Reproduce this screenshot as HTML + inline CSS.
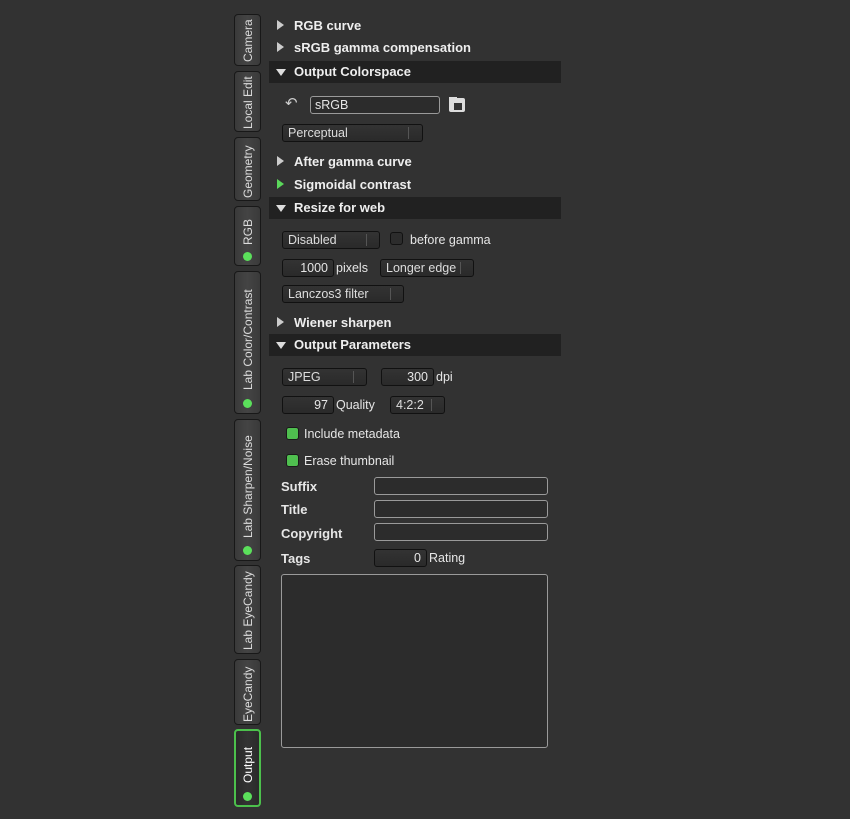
<!DOCTYPE html>
<html><head><meta charset="utf-8"><style>
*{box-sizing:border-box;margin:0;padding:0}
body{width:850px;height:819px;background:#323232;font-family:"Liberation Sans",sans-serif;font-size:12.5px;color:#e6e6e6;position:relative;overflow:hidden}
.a{position:absolute}
.tab{position:absolute;left:234px;width:27px;border:1px solid #181818;border-radius:4px;background:linear-gradient(90deg,#3a3a3a,#444 50%,#3a3a3a)}
.tab span{position:absolute;left:50%;white-space:nowrap;transform-origin:0 0;transform:rotate(-90deg) translate(0,-50%);color:#dcdcdc;font-size:12px}
.dot{position:absolute;left:8px;width:9px;height:9px;border-radius:50%;background:#5be05b}
.hdr{position:absolute;left:276px;font-weight:bold;font-size:13px;color:#eee}
.bar{position:absolute;left:269px;width:292px;height:22px;background:#212121}
.tri{position:absolute;left:277px;width:0;height:0;border-top:5px solid transparent;border-bottom:5px solid transparent;border-left:7px solid #ccc}
.dn{position:absolute;left:276px;width:0;height:0;border-left:5px solid transparent;border-right:5px solid transparent;border-top:7px solid #ddd}
.cb{position:absolute;height:18px;border:1px solid #111;border-radius:3px;background:linear-gradient(#333,#2a2a2a);padding-left:5px;line-height:16px;color:#ddd}
.cb i{position:absolute;top:2px;bottom:2px;width:1px;background:#555}
.sp{position:absolute;height:18px;border:1px solid #111;border-radius:3px;background:linear-gradient(#333,#2a2a2a);text-align:right;padding-right:5px;line-height:16px}
.in{position:absolute;height:18px;border:1px solid #9a9a9a;border-radius:3px;background:#2c2c2c;padding-left:4px;line-height:16px}
.lb{position:absolute;font-weight:bold;font-size:13px}
.ck{position:absolute;width:13px;height:13px;border-radius:3px;border:1px solid #111;background:#2c2c2c}
.g{background:#4fbf4f;border-color:#1a1a1a}
</style></head><body>
<div class="tab" style="top:14px;height:52px"><span style="top:47px">Camera</span></div>
<div class="tab" style="top:71px;height:61px"><span style="top:57px">Local Edit</span></div>
<div class="tab" style="top:137px;height:64px"><span style="top:60px">Geometry</span></div>
<div class="tab" style="top:206px;height:60px"><span style="top:38px">RGB</span><div class="dot" style="top:45px"></div></div>
<div class="tab" style="top:271px;height:143px"><span style="top:118px">Lab Color/Contrast</span><div class="dot" style="top:127px"></div></div>
<div class="tab" style="top:419px;height:142px"><span style="top:118px">Lab Sharpen/Noise</span><div class="dot" style="top:126px"></div></div>
<div class="tab" style="top:565px;height:89px"><span style="top:84px">Lab EyeCandy</span></div>
<div class="tab" style="top:659px;height:66px"><span style="top:62px">EyeCandy</span></div>
<div class="tab" style="top:729px;height:78px;border:2px solid #4cc04c;background:linear-gradient(90deg,#2a2a2a,#333 50%,#2a2a2a)"><span style="top:52px;color:#fff">Output</span><div class="dot" style="top:61px;left:7px"></div></div>

<div class="tri" style="top:20px"></div><div class="hdr" style="left:294px;top:18px">RGB curve</div>
<div class="tri" style="top:42px"></div><div class="hdr" style="left:294px;top:40px">sRGB gamma compensation</div>
<div class="bar" style="top:61px"></div><div class="dn" style="top:69px"></div><div class="hdr" style="left:294px;top:64px">Output Colorspace</div>
<div class="a" style="left:285px;top:94px;font-size:15px;color:#ccc">&#x21B6;</div>
<div class="in" style="left:310px;top:96px;width:130px">sRGB</div>
<svg class="a" style="left:448px;top:96px" width="19" height="17"><rect x="1" y="2" width="16" height="14" rx="2" fill="#ddd"/><rect x="1" y="1" width="8" height="3" fill="#ddd"/><rect x="6" y="7" width="8" height="7" fill="#333"/></svg>
<div class="cb" style="left:282px;top:124px;width:141px">Perceptual<i style="left:125px"></i></div>
<div class="tri" style="top:156px"></div><div class="hdr" style="left:294px;top:154px">After gamma curve</div>
<div class="tri" style="top:179px;border-left-color:#5bd85b"></div><div class="hdr" style="left:294px;top:177px">Sigmoidal contrast</div>
<div class="bar" style="top:197px"></div><div class="dn" style="top:205px"></div><div class="hdr" style="left:294px;top:200px">Resize for web</div>
<div class="cb" style="left:282px;top:231px;width:98px">Disabled<i style="left:83px"></i></div>
<div class="ck" style="left:390px;top:232px"></div><div class="a" style="left:410px;top:233px">before gamma</div>
<div class="sp" style="left:282px;top:259px;width:52px">1000</div><div class="a" style="left:336px;top:261px">pixels</div>
<div class="cb" style="left:380px;top:259px;width:94px">Longer edge<i style="left:79px"></i></div>
<div class="cb" style="left:282px;top:285px;width:122px">Lanczos3 filter<i style="left:107px"></i></div>
<div class="tri" style="top:317px"></div><div class="hdr" style="left:294px;top:315px">Wiener sharpen</div>
<div class="bar" style="top:334px"></div><div class="dn" style="top:342px"></div><div class="hdr" style="left:294px;top:337px">Output Parameters</div>
<div class="cb" style="left:282px;top:368px;width:85px">JPEG<i style="left:70px"></i></div>
<div class="sp" style="left:381px;top:368px;width:53px">300</div><div class="a" style="left:436px;top:370px">dpi</div>
<div class="sp" style="left:282px;top:396px;width:52px">97</div><div class="a" style="left:336px;top:398px">Quality</div>
<div class="cb" style="left:390px;top:396px;width:55px">4:2:2<i style="left:40px"></i></div>
<div class="ck g" style="left:286px;top:427px"></div><div class="a" style="left:304px;top:427px">Include metadata</div>
<div class="ck g" style="left:286px;top:454px"></div><div class="a" style="left:304px;top:454px">Erase thumbnail</div>
<div class="lb" style="left:281px;top:479px">Suffix</div><div class="in" style="left:374px;top:477px;width:174px"></div>
<div class="lb" style="left:281px;top:502px">Title</div><div class="in" style="left:374px;top:500px;width:174px"></div>
<div class="lb" style="left:281px;top:526px">Copyright</div><div class="in" style="left:374px;top:523px;width:174px"></div>
<div class="lb" style="left:281px;top:551px">Tags</div>
<div class="sp" style="left:374px;top:549px;width:53px">0</div><div class="a" style="left:429px;top:551px">Rating</div>
<div class="in" style="left:281px;top:574px;width:267px;height:174px"></div>
</body></html>
